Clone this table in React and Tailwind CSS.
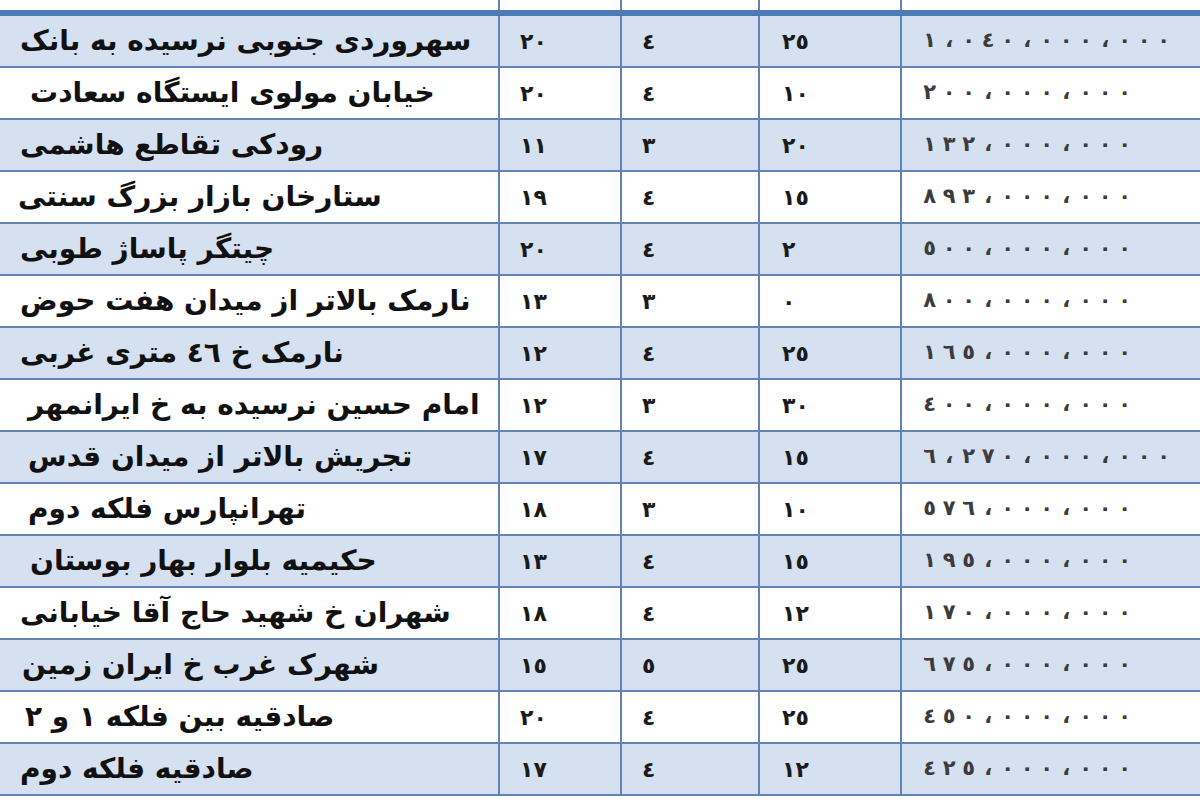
const rows = [
  ['سهروردی جنوبی نرسیده به بانک', '٢٠', '٤', '٢٥', '١،٠٤٠،٠٠٠،٠٠٠', 'pl-[20px]'],
  ['خیابان مولوی ایستگاه سعادت', '٢٠', '٤', '١٠', '٢٠٠،٠٠٠،٠٠٠', 'pl-[30px]'],
  ['رودکی تقاطع هاشمی', '١١', '٣', '٢٠', '١٣٢،٠٠٠،٠٠٠', 'pl-[20px]'],
  ['ستارخان بازار بزرگ سنتی', '١٩', '٤', '١٥', '٨٩٣،٠٠٠،٠٠٠', 'pl-[18px]'],
  ['چیتگر پاساژ طوبی', '٢٠', '٤', '٢', '٥٠٠،٠٠٠،٠٠٠', 'pl-[20px]'],
  ['نارمک بالاتر از میدان هفت حوض', '١٣', '٣', '٠', '٨٠٠،٠٠٠،٠٠٠', 'pl-[20px]'],
  ['نارمک خ ٤٦ متری غربی', '١٢', '٤', '٢٥', '١٦٥،٠٠٠،٠٠٠', 'pl-[20px]'],
  ['امام حسین نرسیده به خ ایرانمهر', '١٢', '٣', '٣٠', '٤٠٠،٠٠٠،٠٠٠', 'pl-[28px]'],
  ['تجریش بالاتر از میدان قدس', '١٧', '٤', '١٥', '٦،٢٧٠،٠٠٠،٠٠٠', 'pl-[28px]'],
  ['تهرانپارس فلکه دوم', '١٨', '٣', '١٠', '٥٧٦،٠٠٠،٠٠٠', 'pl-[28px]'],
  ['حکیمیه بلوار بهار بوستان', '١٣', '٤', '١٥', '١٩٥،٠٠٠،٠٠٠', 'pl-[30px]'],
  ['شهران خ شهید حاج آقا خیابانی', '١٨', '٤', '١٢', '١٧٠،٠٠٠،٠٠٠', 'pl-[20px]'],
  ['شهرک غرب خ ایران زمین', '١٥', '٥', '٢٥', '٦٧٥،٠٠٠،٠٠٠', 'pl-[22px]'],
  ['صادقیه بین فلکه ١ و ٢', '٢٠', '٤', '٢٥', '٤٥٠،٠٠٠،٠٠٠', 'pl-[25px]'],
  ['صادقیه فلکه دوم', '١٧', '٤', '١٢', '٤٢٥،٠٠٠،٠٠٠', 'pl-[20px]'],
];

const font = { fontFamily: '"DejaVu Sans", "Liberation Sans", sans-serif' };
const grid = 'grid grid-cols-[500px_122px_138px_142px_1fr]';
const cell = 'border-r-2 border-[#6283b8]';

// spaced-out digits, one fixed slot per character
function Price({ value }) {
  return (
    <span dir="ltr" className="inline-flex">
      {[...value].map((ch, i) => (
        <span key={i} className="w-[19.5px] text-center">
          {ch}
        </span>
      ))}
    </span>
  );
}

function Row({ name, a, b, c, price, pad, shaded }) {
  return (
    <div
      className={`${grid} h-[52px] border-b-2 border-[#6283b8] ${
        shaded ? 'bg-[#d5e0f0]' : 'bg-white'
      }`}
    >
      <div
        dir="rtl"
        className={`${cell} ${pad} flex items-center justify-end text-[28px] font-bold text-[#111] whitespace-nowrap`}
      >
        {name}
      </div>
      <div className={`${cell} flex items-center pl-[20px] text-[22px] font-bold text-[#1a1a1a]`}>
        <span dir="ltr">{a}</span>
      </div>
      <div className={`${cell} flex items-center pl-[20px] text-[22px] font-bold text-[#1a1a1a]`}>
        <span dir="ltr">{b}</span>
      </div>
      <div className={`${cell} flex items-center pl-[22px] text-[22px] font-bold text-[#1a1a1a]`}>
        <span dir="ltr">{c}</span>
      </div>
      <div className="flex items-center pl-[18px] text-[21px] font-bold text-[#3c3c3c] whitespace-nowrap overflow-hidden">
        <Price value={price} />
      </div>
    </div>
  );
}

export default function App() {
  return (
    <div className="w-[1200px] h-[800px] overflow-hidden bg-white" style={font}>
      <div className={`${grid} h-[10px] bg-white`}>
        <div className={cell} />
        <div className={cell} />
        <div className={cell} />
        <div className={cell} />
        <div />
      </div>
      <div className="h-[6px] bg-[#4d7bb8]" />
      {rows.map(([name, a, b, c, price, pad], i) => (
        <Row
          key={i}
          name={name}
          a={a}
          b={b}
          c={c}
          price={price}
          pad={pad}
          shaded={i % 2 === 0}
        />
      ))}
    </div>
  );
}
